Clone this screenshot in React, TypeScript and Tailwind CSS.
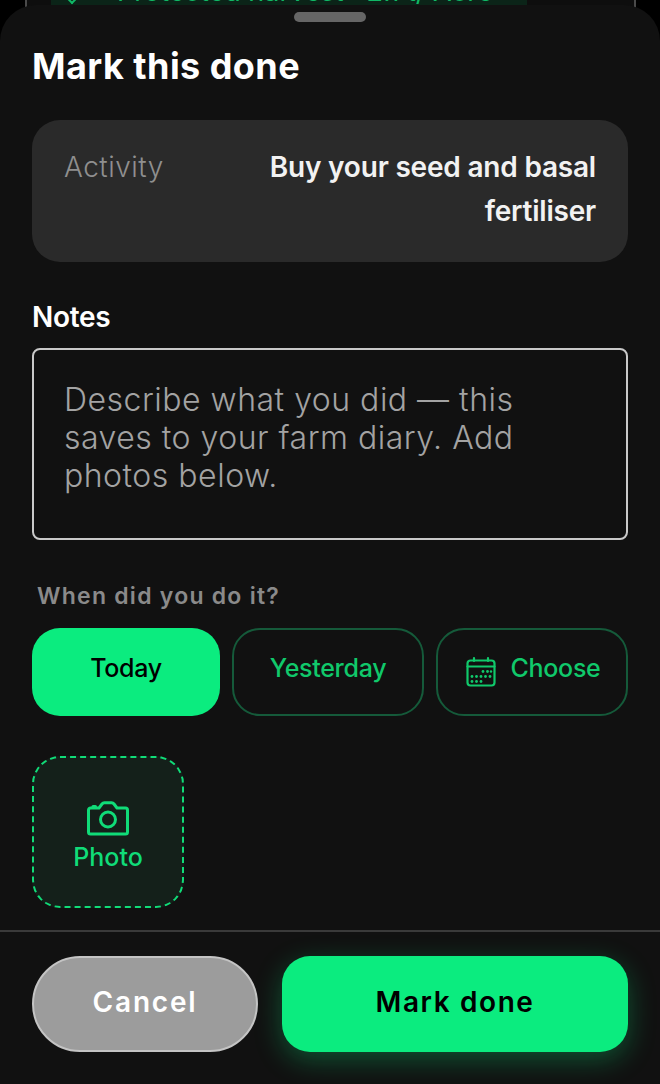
import React from "react";

const font = "font-['Inter',sans-serif]";

function CalendarIcon() {
  return (
    <svg width="32" height="32" viewBox="0 0 32 32" fill="none" stroke="#10c96b" strokeWidth="2.2" strokeLinecap="round" strokeLinejoin="round" className="shrink-0">
      <rect x="2.500" y="4.500" width="27" height="25" rx="3" />
      <path d="M2.500 10.500h27M9 2v3M23 2v3" />
      <g fill="#10c96b" stroke="none">
        <circle cx="18" cy="15.500" r="1.400" /><circle cx="22.500" cy="15.500" r="1.400" /><circle cx="26" cy="15.500" r="1.200" />
        <circle cx="7" cy="20.500" r="1.400" /><circle cx="11.500" cy="20.500" r="1.400" /><circle cx="16" cy="20.500" r="1.400" /><circle cx="20.500" cy="20.500" r="1.400" /><circle cx="25" cy="20.500" r="1.400" />
        <circle cx="7" cy="25.500" r="1.400" /><circle cx="11.500" cy="25.500" r="1.400" /><circle cx="16" cy="25.500" r="1.400" />
      </g>
    </svg>
  );
}

function CameraIcon() {
  return (
    <svg width="44" height="36" viewBox="0 0 44 36" fill="none" stroke="#10dc78" strokeWidth="3" strokeLinecap="round" strokeLinejoin="round">
      <path d="M2.500 10a2 2 0 0 1 2-2h8.500l3-4a3 3 0 0 1 2.400-1.200h7.200A3 3 0 0 1 28 4l3 4h8.500a2 2 0 0 1 2 2v22a2 2 0 0 1-2 2h-35a2 2 0 0 1-2-2z" />
      <circle cx="22" cy="19.500" r="7.500" />
      <path d="M7 6.500h2.500" />
    </svg>
  );
}

export default function App() {
  return (
    <div className={`relative w-[660px] h-[1084px] overflow-hidden bg-black ${font}`}>
      <div className="absolute left-[25px] top-0 h-[14px] w-[611px] overflow-hidden border-x-2 border-[#4a4a4a] bg-[#0e0e0e]">
        <div className="ml-[24px] flex h-[14px] w-[476px] bg-[#0b2418]">
          <div className="ml-[18px] mt-[-3px] h-[6px] w-[6px] shrink-0 rotate-45 border-b-2 border-r-2 border-[#10b866]" />
          <div className="-mt-[23px] pl-[42px] text-[27px] leading-[30px] whitespace-nowrap text-[#10b866]">Protected harvest · 2.1 t/ Acre</div>
        </div>
      </div>
      <div className="absolute inset-x-0 top-[5px] bottom-0 flex flex-col rounded-t-[36px] bg-[#111111]">
        <div className="mx-auto mt-[7px] h-[10px] w-[72px] shrink-0 rounded-full bg-[#666666]" />
        <div className="flex-1 px-8">
          <h1 className="mt-[22px] text-[36px] leading-[44px] font-bold tracking-[0.45px] text-white">Mark this done</h1>
          <div className="mt-[32px] flex h-[142px] justify-between rounded-[28px] bg-[#2a2a2a] pl-8 pr-8 pt-[25px]">
            <span className="text-[28px] leading-[44px] font-light tracking-[0.5px] text-[#8f8f8f]">Activity</span>
            <span className="w-[380px] text-right text-[28px] font-semibold leading-[44px] tracking-[-0.2px] text-[#f2f2f2]">Buy your seed and basal fertiliser</span>
          </div>
          <div className="mt-[38px] text-[28px] font-semibold leading-[34px] tracking-[-0.3px] text-white">Notes</div>
          <div className="mt-[14px] h-[192px] rounded-[8px] border-2 border-[#c9c9c9] pl-[30px] pr-[30px] pt-[31px] text-[32px] leading-[38px] font-light tracking-[0.5px] text-[#a3a3a3]">
            Describe what you did — this saves to your farm diary. Add photos below.
          </div>
          <div className="mt-[40px] pl-[5px] text-[23px] font-semibold leading-[32px] tracking-[1.25px] text-[#8a8a8a]">When did you do it?</div>
          <div className="mt-[16px] flex gap-3">
            <div className="flex h-[88px] w-[188px] items-center justify-center rounded-[28px] bg-[#0bec7f] pb-[6px] text-[25px] font-medium tracking-[-0.3px] text-black">Today</div>
            <div className="flex h-[88px] w-[192px] items-center justify-center rounded-[28px] border-2 border-[#155a3a] pb-[6px] text-[25px] font-medium tracking-[-0.3px] text-[#10c96b]">Yesterday</div>
            <div className="flex h-[88px] w-[192px] items-center justify-center gap-[14px] rounded-[28px] border-2 border-[#155a3a] pl-[1px] text-[25px] font-medium tracking-[-0.3px] text-[#10c96b]"><CalendarIcon /><span className="pb-[6px]">Choose</span></div>
          </div>
          <div className="mt-[40px] flex h-[152px] w-[152px] flex-col items-center justify-center rounded-[28px] border-2 border-dashed border-[#10dc78] bg-[#14201a] pt-[8px] text-[25px] font-medium text-[#10dc78]">
            <CameraIcon />
            <span className="mt-[5px] leading-[32px]">Photo</span>
          </div>
        </div>
        <div className="flex h-[154px] shrink-0 gap-6 border-t-2 border-[#3a3a3a] px-8 pt-[24px]">
          <div className="flex h-[96px] w-[226px] items-center justify-center rounded-full border-2 border-[#c4c4c4] bg-[#9c9c9c] pb-1 text-[28px] font-semibold tracking-[1.8px] text-white">Cancel</div>
          <div className="flex h-[96px] flex-1 items-center justify-center rounded-[28px] bg-[#0bec7f] pb-1 text-[28px] font-semibold tracking-[1.6px] text-black shadow-[0_8px_28px_rgba(11,236,127,0.3)]">Mark done</div>
        </div>
      </div>
    </div>
  );
}
